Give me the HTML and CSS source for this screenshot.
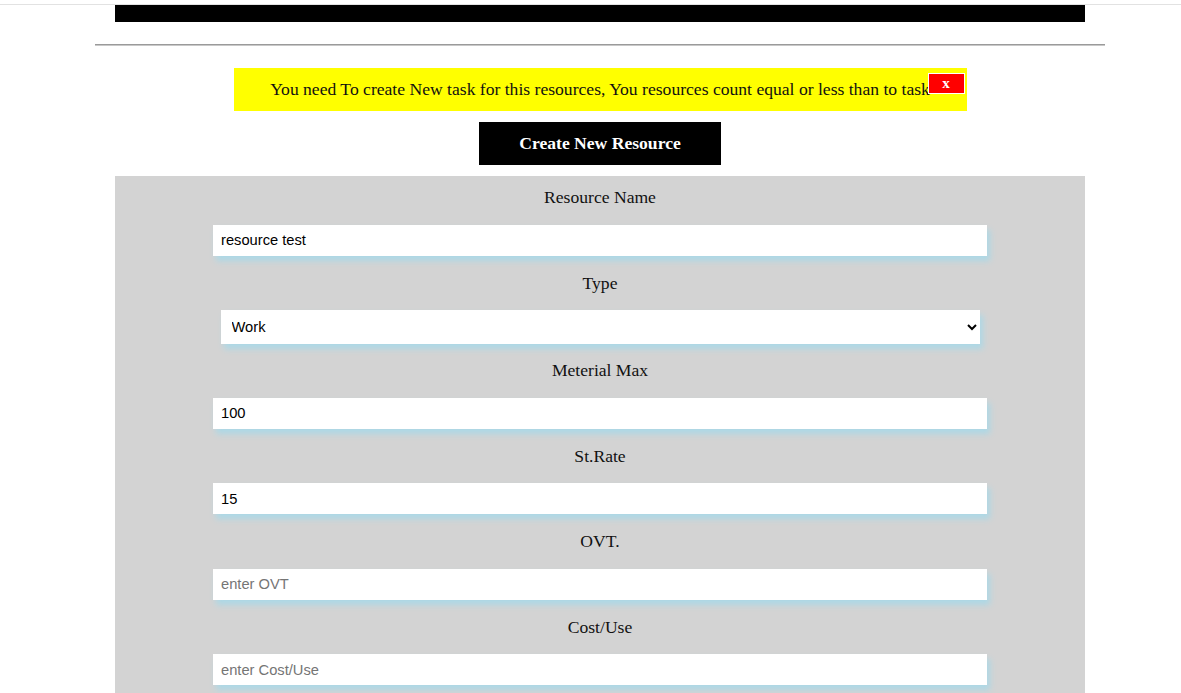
FILE: index.html
```html
<!DOCTYPE html>
<html>
<head>
<meta charset="utf-8">
<link rel="stylesheet" href="styles.css">
</head>
<body>
<div class="topline"></div>
<div class="wrap">
  <div class="blackbar"></div>
  <hr class="rule">
  <div class="alert">
    <span class="alert-text">You need To create New task for this resources, You resources count equal or less than to task</span>
    <button class="close">x</button>
  </div>
  <div class="btn-row"><button class="create">Create New Resource</button></div>
  <form class="panel">
    <label class="lbl">Resource Name</label>
    <input class="field" type="text" value="resource test">
    <label class="lbl">Type</label>
    <select class="sel"><option>Work</option><option>Material</option></select>
    <label class="lbl">Meterial Max</label>
    <input class="field" type="text" value="100">
    <label class="lbl">St.Rate</label>
    <input class="field" type="text" value="15">
    <label class="lbl">OVT.</label>
    <input class="field" type="text" placeholder="enter OVT">
    <label class="lbl">Cost/Use</label>
    <input class="field" type="text" placeholder="enter Cost/Use">
  </form>
</div>
</body>
</html>
```
FILE: styles.css
```css
html, body {
  margin: 0;
  padding: 0;
  background: #fff;
  font-family: "Liberation Serif", "Times New Roman", serif;
  overflow: hidden;
}
.topline {
  height: 4px;
  border-bottom: 1px solid #e2e2e2;
}
.wrap {
  width: 1010px;
  margin-left: 95px;
}
.blackbar {
  height: 17px;
  margin: 0 20px;
  background: #000;
}
.rule {
  margin: 22px 0 0 0;
  height: 0;
  border: none;
  border-top: 1px solid #9a9a9a;
  border-bottom: 1px solid #c8c8c8;
}
.alert {
  position: relative;
  width: 733px;
  box-sizing: border-box;
  margin: 22px auto 0;
  background: #ffff00;
  padding: 11px 0 12px;
  text-align: center;
  font-size: 17.6px;
  line-height: 20px;
  color: #111;
}
.close {
  position: absolute;
  top: 5px;
  right: 2px;
  width: 37px;
  height: 21px;
  padding: 0;
  border: 1px solid #fff;
  background: #ff0000;
  color: #fff;
  font-family: "Liberation Serif", serif;
  font-weight: bold;
  font-size: 15px;
  line-height: 17px;
}
.btn-row {
  display: flex;
  justify-content: center;
  margin-top: 11px;
}
.create {
  width: 242px;
  height: 43px;
  border: none;
  background: #000;
  color: #fff;
  font-family: "Liberation Serif", serif;
  font-weight: bold;
  font-size: 17.6px;
  padding: 0;
}
.panel {
  margin: 11px 20px 0;
  background: #d3d3d3;
  padding: 11px 0 30px;
  display: flex;
  flex-direction: column;
  align-items: center;
}
.lbl {
  display: block;
  font-size: 17.6px;
  line-height: 20px;
  color: #111;
  margin-bottom: 17.5px;
}
.field {
  width: 774px;
  height: 31px;
  box-sizing: border-box;
  border: none;
  outline: none;
  background: #fff;
  padding: 0 8px;
  font-family: "Liberation Sans", Arial, sans-serif;
  font-size: 14.7px;
  color: #000;
  box-shadow: 3px 5px 6px #add8e6;
  margin-bottom: 17px;
}
.field::placeholder {
  color: #757575;
}
.sel {
  width: 759px;
  height: 34px;
  box-sizing: border-box;
  border: none;
  outline: none;
  background: #fff;
  padding: 0 7px;
  font-family: "Liberation Sans", Arial, sans-serif;
  font-size: 14.7px;
  color: #000;
  box-shadow: 3px 5px 6px #add8e6;
  margin-bottom: 16px;
}
```
